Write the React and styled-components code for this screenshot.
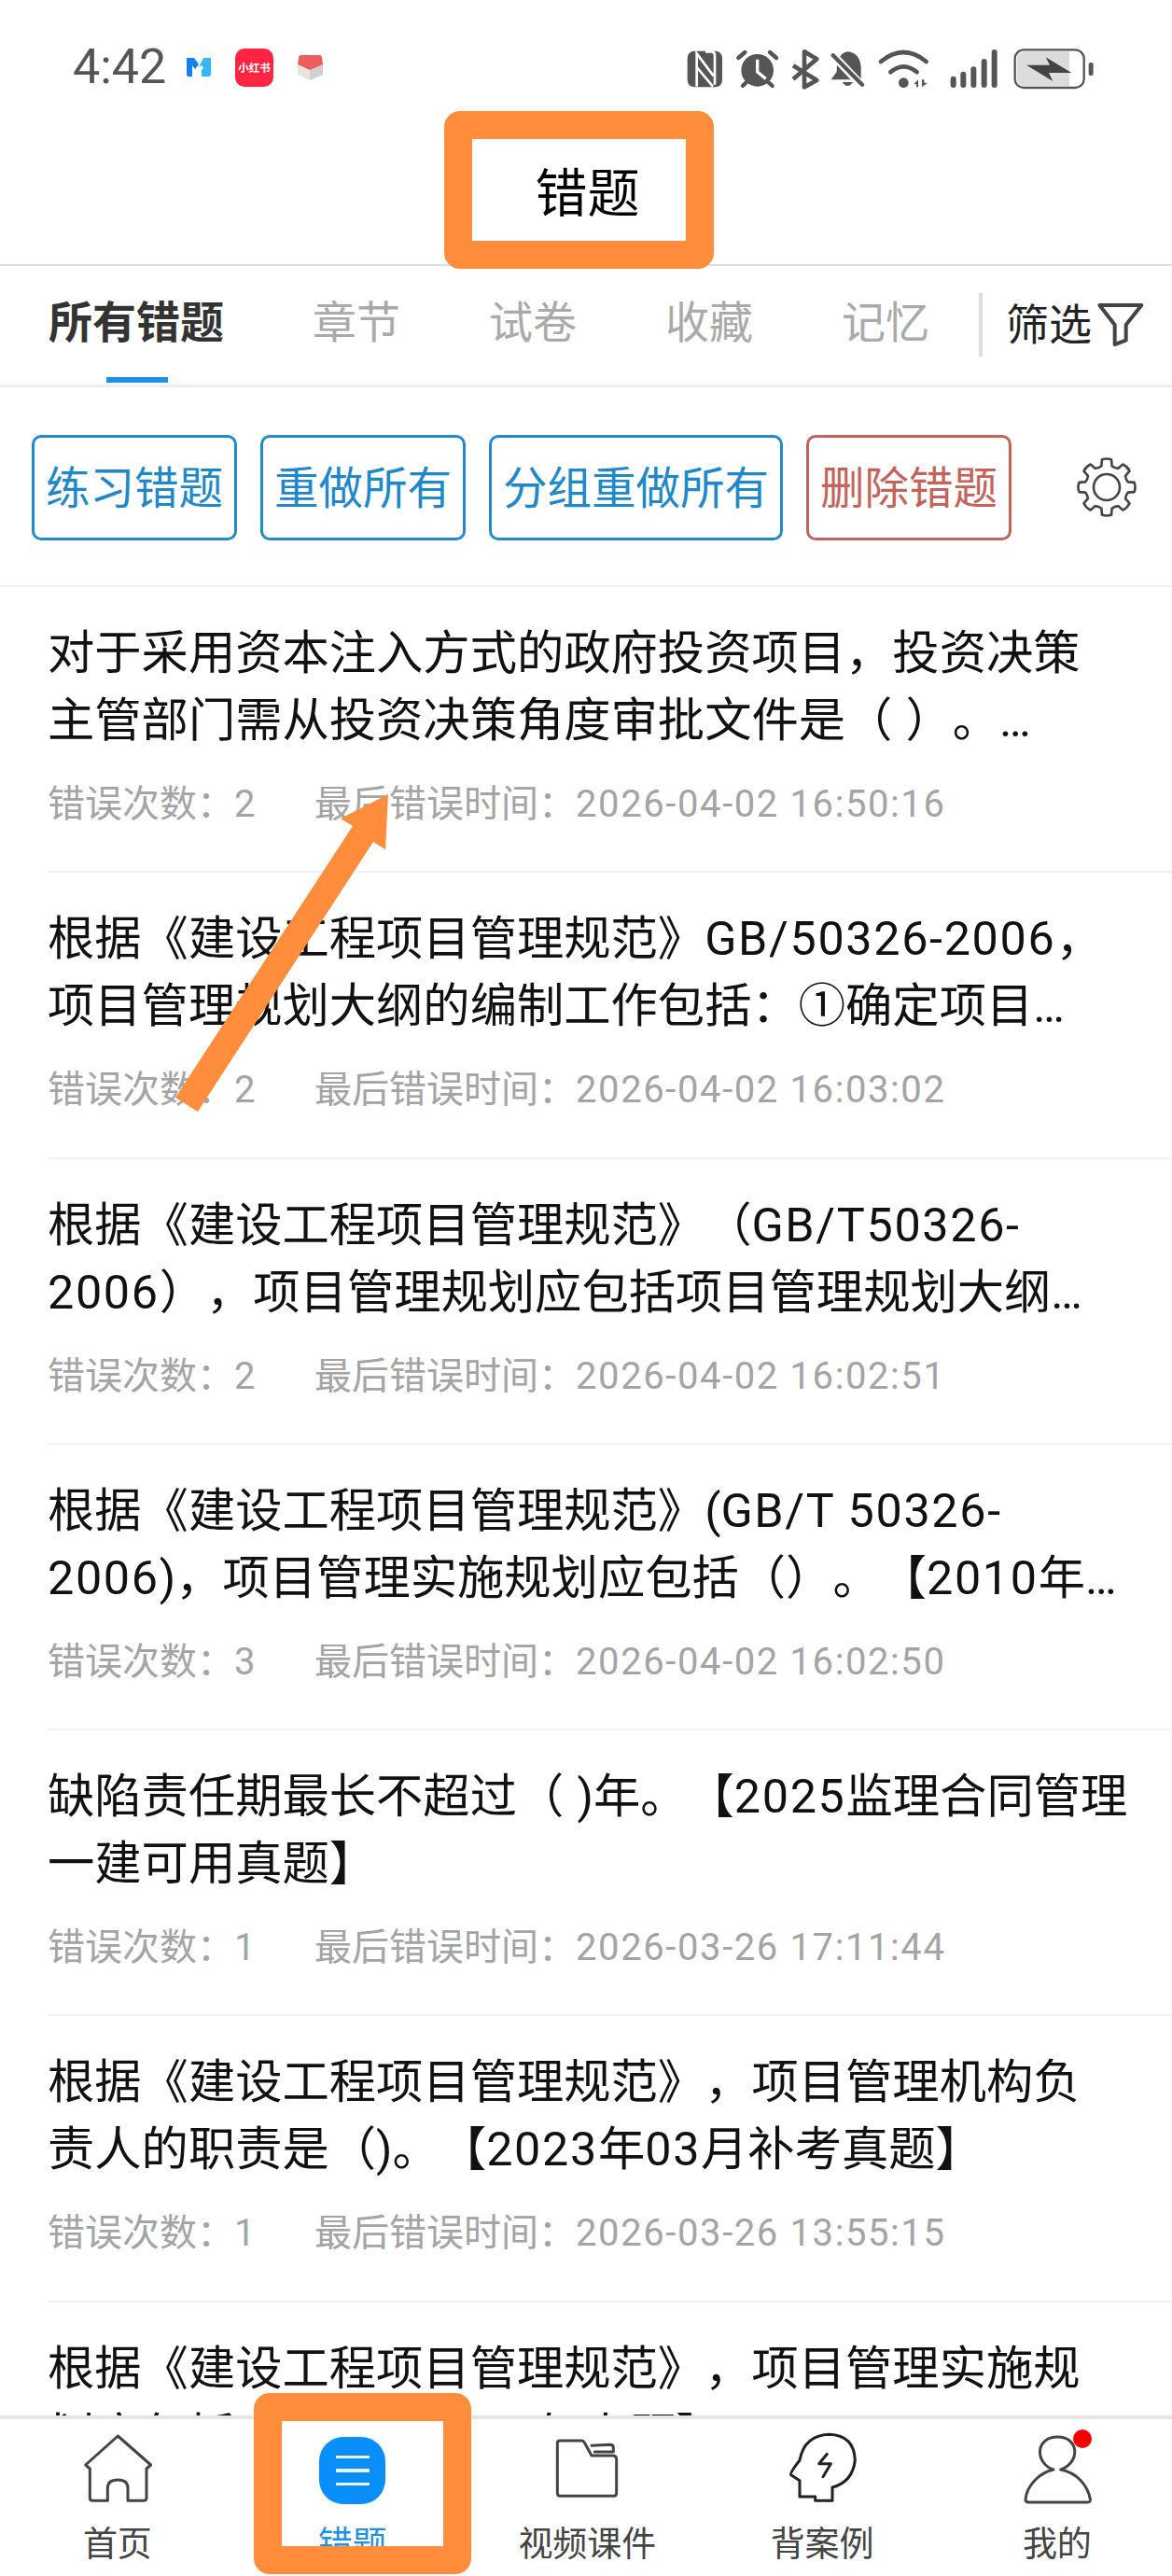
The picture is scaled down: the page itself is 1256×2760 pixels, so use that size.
import React from 'react';
import styled, { createGlobalStyle } from 'styled-components';

const Global = createGlobalStyle`
  html, body { margin: 0; padding: 0; background: #fff; }
  body {
    font-family: Roboto, "Noto Sans CJK SC", sans-serif;
    text-spacing-trim: space-all;
  }
`;

const Screen = styled.div`
  position: relative;
  width: 1256px;
  height: 2760px;
  overflow: hidden;
  display: flex;
  flex-direction: column;
  background: #fff;
`;

const StatusBar = styled.div`
  height: 125px;
  box-sizing: border-box;
  padding: 19px 0 0 78px;
  display: flex;
  align-items: center;
  flex: none;
`;
const Time = styled.span`
  font-family: Roboto, sans-serif;
  font-size: 52px;
  color: #555;
  line-height: 1;
  width: 122px;
`;
const AppDots = styled.div`
  display: flex;
  align-items: center;
`;
const RedApp = styled.div`
  width: 41px;
  height: 41px;
  margin: 0 25px 0 26px;
  border-radius: 10px;
  background: #ff2442;
  color: #fff;
  font-family: "Noto Sans CJK SC", sans-serif;
  font-size: 11.5px;
  font-weight: 700;
  display: flex;
  align-items: center;
  justify-content: center;
  white-space: nowrap;
`;
const StatusIcons = styled.svg`
  width: 500px;
  height: 100px;
  margin-left: auto;
  margin-right: 56px;
  flex: none;
`;

const TitleBar = styled.header`
  height: 160px;
  flex: none;
  box-sizing: border-box;
  border-bottom: 2px solid #dfdfe3;
  display: flex;
  align-items: center;
  justify-content: center;
  font-family: "Noto Sans CJK SC", sans-serif;
  font-size: 56px;
  color: #000;
  padding: 0 0 4px 3px;
`;

const TabBar = styled.nav`
  height: 130px;
  flex: none;
  box-sizing: border-box;
  border-bottom: 3px solid #efefef;
  display: flex;
  align-items: center;
  padding-left: 52px;
  padding-bottom: 5px;
`;
const Tab = styled.div`
  position: relative;
  font-size: 47px;
  line-height: 60px;
  font-weight: ${p => (p.$active ? 700 : 400)};
  color: ${p => (p.$active ? '#333' : '#aaa')};
  margin-right: 95px;
  white-space: nowrap;
  &::after {
    content: '';
    display: ${p => (p.$active ? 'block' : 'none')};
    position: absolute;
    left: 62px;
    width: 66px;
    height: 6px;
    bottom: -34px;
    background: #1e90e6;
  }
`;
const FilterBox = styled.div`
  position: absolute;
  left: 1049px;
  top: 314px;
  height: 68px;
  border-left: 4px solid #dedede;
  padding-left: 25px;
  display: flex;
  align-items: center;
  font-size: 46px;
  color: #222;
`;
const FilterLabel = styled.span`
  margin-bottom: 8px;
`;
const FilterIcon = styled.svg`
  width: 55px;
  height: 50px;
  margin-left: 4px;
`;

const ActionBar = styled.div`
  height: 214px;
  flex: none;
  box-sizing: border-box;
  border-bottom: 2px solid #f1f1f1;
  padding: 2px 0 0 34px;
  display: flex;
  align-items: center;
  gap: 25px;
`;
const ActionButton = styled.div`
  height: 113px;
  box-sizing: border-box;
  border: 3px solid ${p => (p.$danger ? '#c4625c' : '#2389cd')};
  color: ${p => (p.$danger ? '#c4625c' : '#1e88c8')};
  border-radius: 10px;
  padding: 0 12px 6px;
  display: flex;
  align-items: center;
  font-size: 47.5px;
  white-space: nowrap;
`;
const Gear = styled.svg`
  width: 64px;
  height: 64px;
  margin-left: 45px;
`;

const List = styled.main`
  flex: 1;
  min-height: 0;
  overflow: hidden;
  padding-left: 51px;
`;
const Item = styled.article`
  height: 306.3px;
  box-sizing: border-box;
  padding-top: 35px;
  border-bottom: 2px solid #f1f1f1;
`;
const Line = styled.div`
  font-size: 50.3px;
  line-height: 72px;
  color: #111;
  white-space: nowrap;
`;
const Meta = styled.div`
  margin-top: 26px;
  display: flex;
  font-size: 40px;
  line-height: 56px;
  color: #a4a4a4;
  white-space: nowrap;
`;
const Count = styled.span`
  width: 286px;
  flex: none;
`;
const Latin = styled.span`
  letter-spacing: 0.033em;
`;
const DateText = styled.span`
  letter-spacing: 0.04em;
`;

const BottomNav = styled.nav`
  height: 172px;
  flex: none;
  box-sizing: border-box;
  border-top: 4px solid #e6e6e9;
  background: #fff;
  display: grid;
  grid-template-columns: repeat(5, 251.75px);
  padding-top: 14px;
`;
const NavItem = styled.div`
  position: relative;
  display: flex;
  flex-direction: column;
  align-items: center;
  font-family: "Noto Sans CJK SC", sans-serif;
  font-size: 37px;
  line-height: 44px;
  color: ${p => (p.$active ? '#1e90e6' : '#444')};
`;
const NavIcon = styled.svg`
  width: 78.33px;
  height: 77.33px;
  margin-bottom: 18px;
  flex: none;
`;
const MenuBadge = styled.div`
  width: 71px;
  height: 72px;
  margin: 5px 0 18px;
  border-radius: 26px;
  background: #0a8ffa;
  display: flex;
  flex-direction: column;
  align-items: center;
  justify-content: center;
  gap: 11px;
  flex: none;
`;
const MenuBar = styled.span`
  width: 36px;
  height: 3.5px;
  background: #e8f4ff;
`;
const RedDot = styled.span`
  position: absolute;
  left: 143px;
  top: -3px;
  width: 20px;
  height: 20px;
  border-radius: 50%;
  background: #f80000;
`;

const Highlight = styled.div`
  position: absolute;
  left: ${p => p.$x}px;
  top: ${p => p.$y}px;
  width: ${p => p.$w}px;
  height: ${p => p.$h}px;
  box-sizing: border-box;
  border: 30px solid #ff8d3b;
  border-radius: 17px;
`;
const ArrowMark = styled.svg`
  position: absolute;
  left: 0;
  top: 0;
  pointer-events: none;
`;

const items = [
  { l: ['对于采用资本注入方式的政府投资项目，投资决策', '主管部门需从投资决策角度审批文件是（ ）。…'], n: 2, t: '2026-04-02 16:50:16' },
  { l: ['根据《建设工程项目管理规范》GB/50326-2006，', '项目管理规划大纲的编制工作包括：①确定项目…'], n: 2, t: '2026-04-02 16:03:02' },
  { l: ['根据《建设工程项目管理规范》（GB/T50326-', '2006），项目管理规划应包括项目管理规划大纲…'], n: 2, t: '2026-04-02 16:02:51' },
  { l: ['根据《建设工程项目管理规范》(GB/T 50326-', '2006)，项目管理实施规划应包括（）。【2010年…'], n: 3, t: '2026-04-02 16:02:50' },
  { l: ['缺陷责任期最长不超过（ )年。【2025监理合同管理', '一建可用真题】'], n: 1, t: '2026-03-26 17:11:44' },
  { l: ['根据《建设工程项目管理规范》，项目管理机构负', '责人的职责是（)。【2023年03月补考真题】'], n: 1, t: '2026-03-26 13:55:15' },
  { l: ['根据《建设工程项目管理规范》，项目管理实施规', '划应包括（）。【2024年真题】'], n: 1, t: '2026-03-26 13:50:10' },
];

const spaced = s =>
  s.split(/([0-9A-Za-z/\-:… ]+)/).map((part, i) => (i % 2 ? <Latin key={i}>{part}</Latin> : part));

const gearPath = (() => {
  const c = 32, ro = 30, ri = 23.5, teeth = 8;
  const pt = (r, a) => `${(c + r * Math.cos(a)).toFixed(2)},${(c + r * Math.sin(a)).toFixed(2)}`;
  let d = '';
  for (let i = 0; i < teeth; i++) {
    const a = (i * 2 * Math.PI) / teeth - Math.PI / 2;
    const w = 0.24, s = 0.17;
    d += `${i ? 'L' : 'M'}${pt(ri, a - w)} L${pt(ro, a - s)} Q${pt(ro + 1.5, a)} ${pt(ro, a + s)} L${pt(ri, a + w)} `;
    d += `Q${pt(ri - 1.5, a + Math.PI / 8)} ${pt(ri, a + (2 * Math.PI) / teeth - w)} `;
  }
  return d + 'Z';
})();

const ink = { fill: 'none', stroke: '#444', strokeWidth: 9, strokeLinejoin: 'round', strokeLinecap: 'round' };

export default function App() {
  return (
    <Screen>
      <Global />
      <StatusBar>
        <Time>4:42</Time>
        <AppDots>
          <svg width="26" height="22" viewBox="0 0 26 22">
            <path d="M0 1 H8 L13 8 L9 13 L6 9 V21 H2 Q0 21 0 19Z" fill="#1580ee" />
            <path d="M13 11 L18 1 H26 V19 Q26 21 24 21 H15 V14Z" fill="#33b8f5" />
            <path d="M11 21 V13 L16 9 L18 12 L16 14 V21Z" fill="#fff" />
          </svg>
          <RedApp>小红书</RedApp>
          <svg width="29" height="27" viewBox="0 0 29 27">
            <path d="M1 10 L14 15 L28 10 V21 L14 27 L1 21Z" fill="#e6e3e3" />
            <path d="M14 15 L28 10 V21 L14 27Z" fill="#d3d0d0" />
            <path d="M2 3 Q2 0 5 0 H24 Q27 0 27 3 L28 10 L14 16 L1 10Z" fill="#ee5d5d" />
          </svg>
        </AppDots>
        <StatusIcons viewBox="0 0 1500 300">
          <rect x="110" y="98" width="112" height="116" rx="22" fill="#555" />
          <path d="M140 212 V106 L194 178 M168 100 H190 Q198 102 198 112 V206 M140 150 L192 212" fill="none" stroke="#fff" strokeWidth="8" />
          <circle cx="335" cy="160" r="52" fill="#555" />
          <path d="M274 120 L295 102 M375 102 L396 120 M288 210 L300 198 M383 210 L370 198" stroke="#555" strokeWidth="13" strokeLinecap="round" />
          <path d="M335 125 V165 L362 187" fill="none" stroke="#fff" strokeWidth="10" />
          <path d="M450 145 L526 192 L486 214 V100 L526 124 L450 188" fill="none" stroke="#555" strokeWidth="14" strokeLinejoin="round" />
          <path d="M625 100 Q665 104 668 150 L668 190 H572 L590 165 Q590 106 625 100Z" fill="#555" />
          <path d="M608 198 Q625 222 642 198Z" fill="#555" />
          <path d="M566 98 L664 202" stroke="#fff" strokeWidth="26" />
          <path d="M578 112 L672 206" stroke="#555" strokeWidth="13" strokeLinecap="round" />
          <path d="M732 132 Q805 72 878 132 M763 166 Q805 130 848 166" fill="none" stroke="#555" strokeWidth="14" strokeLinecap="round" />
          <circle cx="805" cy="200" r="16" fill="#555" />
          <path d="M838 204 L852 190 V214 H846 V204Z M864 190 H871 V200 H882 L864 214Z" fill="#555" />
          <path d="M965 207 V188 M997 207 V173 M1030 207 V157 M1064 207 V132 M1097 207 V102" stroke="#555" strokeWidth="18" strokeLinecap="round" />
          <rect x="1163" y="94" width="222" height="122" rx="28" fill="#fff" stroke="#555" strokeWidth="7" />
          <path d="M1170 122 Q1170 100 1192 100 H1338 V210 H1192 Q1170 210 1170 188Z" fill="#dcdcdc" />
          <rect x="1400" y="135" width="15" height="42" rx="6" fill="#555" />
          <path d="M1200 143 H1275 L1262 118 L1345 168 H1272 L1285 195Z" fill="#444" />
        </StatusIcons>
      </StatusBar>

      <TitleBar>错题</TitleBar>

      <TabBar>
        <Tab $active>所有错题</Tab>
        <Tab>章节</Tab>
        <Tab>试卷</Tab>
        <Tab>收藏</Tab>
        <Tab>记忆</Tab>
        <FilterBox>
          <FilterLabel>筛选</FilterLabel>
          <FilterIcon viewBox="430 80 165 150">
            <path d="M443 92 H578 L528 155 V205 L492 218 V155Z" fill="none" stroke="#444" strokeWidth="12" strokeLinejoin="round" />
          </FilterIcon>
        </FilterBox>
      </TabBar>

      <ActionBar>
        <ActionButton>练习错题</ActionButton>
        <ActionButton>重做所有</ActionButton>
        <ActionButton>分组重做所有</ActionButton>
        <ActionButton $danger>删除错题</ActionButton>
        <Gear viewBox="0 0 64 64">
          <path d={gearPath} fill="none" stroke="#444" strokeWidth="2.6" strokeLinejoin="round" />
          <circle cx="32" cy="32" r="14" fill="none" stroke="#444" strokeWidth="2.6" />
        </Gear>
      </ActionBar>

      <List>
        {items.map(it => (
          <Item key={it.t}>
            <Line>{spaced(it.l[0])}</Line>
            <Line>{spaced(it.l[1])}</Line>
            <Meta>
              <Count>错误次数：{it.n}</Count>
              <span>最后错误时间：<DateText>{it.t}</DateText></span>
            </Meta>
          </Item>
        ))}
      </List>

      <BottomNav>
        <NavItem>
          <NavIcon viewBox="80 55 235 232">
            <path d="M198 67 L94 160 L108 172 V266 Q108 275 117 275 H165 V235 Q165 208 198 208 Q230 208 230 235 V275 H280 Q290 275 290 266 V172 L304 160Z" {...ink} />
          </NavIcon>
          首页
        </NavItem>
        <NavItem $active>
          <MenuBadge>
            <MenuBar />
            <MenuBar />
            <MenuBar />
          </MenuBadge>
          错题
        </NavItem>
        <NavItem>
          <NavIcon viewBox="150 55 235 232">
            <path d="M172 90 Q172 82 180 82 H250 Q256 82 259 88 L282 130 H350 Q362 130 362 142 V250 Q362 260 352 260 H182 Q172 260 172 250Z M282 98 L342 95 Q352 95 352 105 V118 H292" {...ink} />
          </NavIcon>
          视频课件
        </NavItem>
        <NavItem>
          <NavIcon viewBox="905 55 235 232">
            <path d="M950 262 V210 L922 192 Q918 186 950 145 Q965 65 1045 62 Q1125 65 1128 145 Q1120 215 1055 232 V275 H1000 V262Z" {...ink} stroke="#222" />
            <path d="M1038 125 L1012 156 H1050 L1025 198" {...ink} stroke="#222" />
          </NavIcon>
          背案例
        </NavItem>
        <NavItem>
          <NavIcon viewBox="280 50 235 232">
            <path d="M408 170 C470 150 470 65 398 65 C325 65 325 150 385 170 C340 180 300 220 295 265 Q295 275 305 275 H495 Q505 275 503 265 C495 220 460 180 408 170Z" {...ink} />
          </NavIcon>
          我的
          <RedDot />
        </NavItem>
      </BottomNav>

      <Highlight $x={476} $y={119} $w={289} $h={169} />
      <Highlight $x={272} $y={2564} $w={233} $h={194} />
      <ArrowMark width="1256" height="2760" viewBox="0 0 1256 2760">
        <path d="M416 851 L365 877 L378 885 L188 1176 L212 1191 L400 902 L413 910Z" fill="#ff8d3b" />
      </ArrowMark>
    </Screen>
  );
}
